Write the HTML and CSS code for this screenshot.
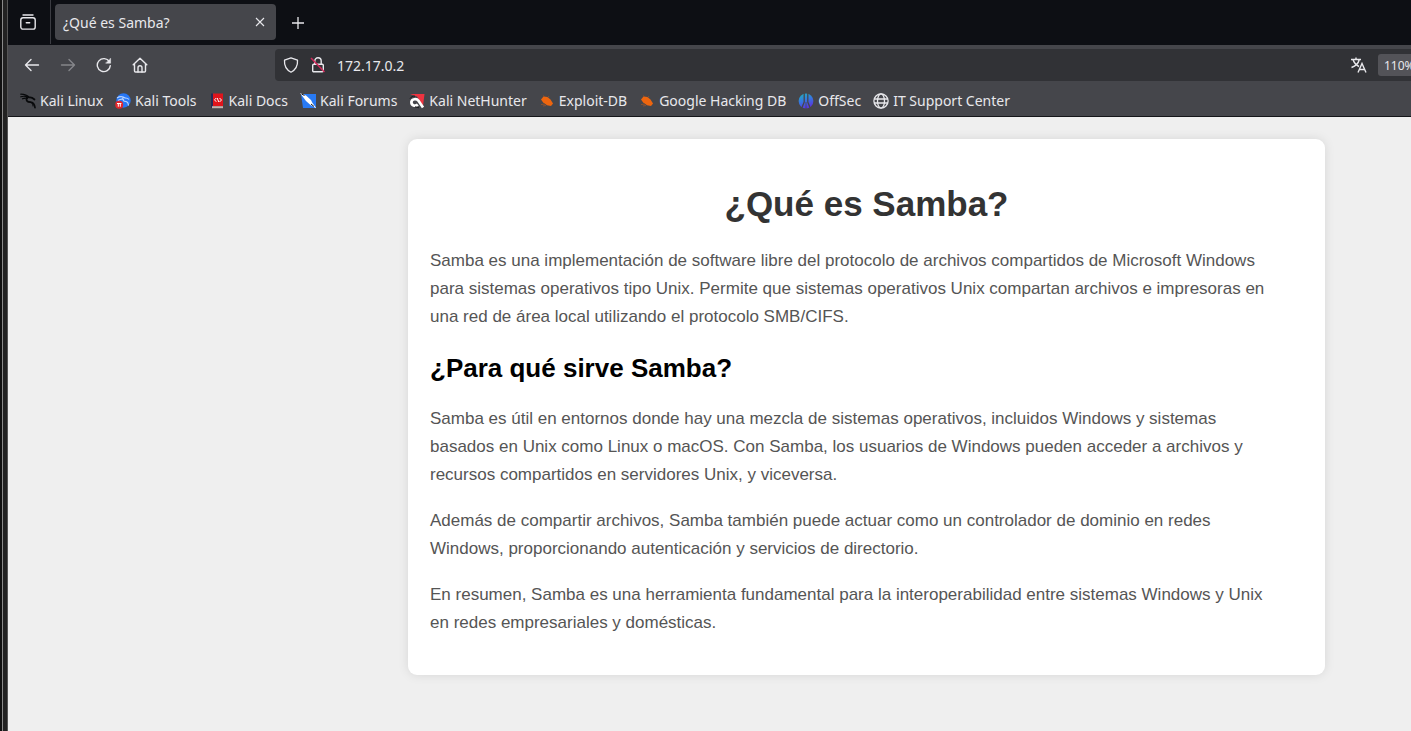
FILE: index.html
```html
<!DOCTYPE html>
<html lang="es">
  <head>
    <meta charset="UTF-8">
    <title>¿Qué es Samba?</title>
    <link rel="stylesheet" href="styles.css">
  </head>

  <body>
    <div class="edge"></div>
    <div class="browser">
      <div class="tabs">
        <button class="view" aria-label="Firefox View">
          <svg width="16" height="16" viewBox="0 0 16 16" fill="none" stroke="currentColor" stroke-width="1.4" stroke-linecap="round">
            <path d="M3 1h10"/>
            <rect x="0.8" y="3.7" width="14.4" height="11.4" rx="2.2"/>
            <path d="M6.3 8.8h3.4"/>
          </svg>
        </button>
        <div class="tab">
          <span class="tab-title">¿Qué es Samba?</span>
          <button class="close" aria-label="Cerrar">
            <svg width="10" height="10" viewBox="0 0 10 10" stroke="currentColor" stroke-width="1.1"><path d="M1 1l8 8M9 1l-8 8"/></svg>
          </button>
        </div>
        <button class="new-tab" aria-label="Nueva pestaña">
          <svg width="12" height="12" viewBox="0 0 12 12" stroke="currentColor" stroke-width="1.3"><path d="M6 0v12M0 6h12"/></svg>
        </button>
      </div>

      <div class="toolbar">
        <div class="nav">
          <button aria-label="Atrás">
            <svg width="16" height="16" viewBox="0 0 16 16" fill="none" stroke="currentColor" stroke-width="1.4" stroke-linecap="round" stroke-linejoin="round"><path d="M14.5 8H1.5M7 2.5L1.5 8L7 13.5"/></svg>
          </button>
          <button aria-label="Adelante" disabled>
            <svg width="16" height="16" viewBox="0 0 16 16" fill="none" stroke="currentColor" stroke-width="1.4" stroke-linecap="round" stroke-linejoin="round"><path d="M1.5 8h13M9 2.5L14.5 8L9 13.5"/></svg>
          </button>
          <button aria-label="Recargar">
            <svg width="16" height="16" viewBox="0 0 16 16" fill="none" stroke="currentColor" stroke-width="1.4" stroke-linecap="round" stroke-linejoin="round">
              <path d="M13.4 4.8A6.5 6.5 0 1 0 14.3 8.6"/>
              <path d="M14.6 1.5v4.7h-4.7z" fill="currentColor" stroke-width="0.5"/>
            </svg>
          </button>
          <button aria-label="Inicio">
            <svg width="16" height="16" viewBox="0 0 16 16" fill="none" stroke="currentColor" stroke-width="1.4" stroke-linecap="round" stroke-linejoin="round">
              <path d="M1.2 7.8L8 1.2l6.8 6.6M2.5 6.8V14a1 1 0 0 0 1 1h9a1 1 0 0 0 1-1V6.8"/>
              <path d="M6 15v-4.2a2 2 0 0 1 4 0V15"/>
            </svg>
          </button>
        </div>
        <div class="urlbar">
          <svg width="16" height="16" viewBox="0 0 16 16" fill="none" stroke="currentColor" stroke-width="1.3" stroke-linejoin="round">
            <path d="M8 .8L14.5 3.2c.4 5-1.8 9.4-6.5 12C3.3 12.6 1.1 8.2 1.5 3.2z"/>
          </svg>
          <svg width="16" height="16" viewBox="0 0 16 16" fill="none" stroke="currentColor" stroke-width="1.4">
            <path d="M4.8 7V4a3.2 3.2 0 0 1 6.4 0v3"/>
            <rect x="2.7" y="7.3" width="10.6" height="7.4" rx="1"/>
            <path d="M1 1l13.5 14" stroke="#d0285a" stroke-width="1.5"/>
          </svg>
          <input type="text" class="address" aria-label="Dirección" value="172.17.0.2">
          <button class="translate" aria-label="Traducir">
            <svg width="16" height="16" viewBox="0 0 16 16" fill="none" stroke="currentColor" stroke-width="1.4">
              <path d="M0 2.5h10M5 .5v2M2 2.5c1 3.5 3 5.5 6 7M8.3 2.5C7.5 6 4.5 9 .5 10.5"/>
              <path d="M7 15.5l4-9l4 9M8.5 12.5h5"/>
            </svg>
          </button>
          <button class="zoom">110%</button>
        </div>
      </div>

      <div class="bookmarks">
        <a href="#">
          <svg width="16" height="16" viewBox="0 0 16 16" fill="none" stroke="#08090b" stroke-linecap="round">
            <path d="M.8 1.2c3 .2 6 .6 8.5 3.2M.8 3.8c2.5-.8 5-.7 7 .6M2.5 5.8c1.5-.8 3-.9 5-.6" stroke-width="1.2"/>
            <path d="M7.5 4c-2.5 3.5 0 5 3 5.2c2.5.2 4 1.8 4.500 5.500M9 4.500c2-.5 3.500.2 5.500 2" stroke-width="1.7"/>
            <path d="M10 9c2.5.8 3.2 2.5 3 4"/>
          </svg>
          Kali Linux
        </a>
        <a href="#">
          <svg width="16" height="16" viewBox="0 0 16 16" fill="none">
            <circle cx="8.5" cy="7.5" r="7.2" fill="#2777f5"/>
            <path d="M2 5c3-2 6-1.5 8.5.2M3 7.5c2.5-1.8 4-1.8 6-1M8 4.5c-1 3 1 3.8 3 4c1.6.3 2.3 1.5 2.5 4M10 5c2-.2 3 .3 4 1.5" stroke="#b9d5ff" stroke-width="1.1"/>
            <circle cx="4.2" cy="11.8" r="4" fill="#e3262b"/>
            <path d="M2 10.5h4.4M3.3 10.5v3.2M5.3 10.5v3.2" stroke="#fff"/>
          </svg>
          Kali Tools
        </a>
        <a href="#">
          <svg width="16" height="16" viewBox="0 0 16 16" fill="none">
            <path d="M2 .5h2V15H2z" fill="#262a56"/>
            <path d="M4 .5h10v12.5H4z" fill="#e0141c"/>
            <path d="M3 13.2h11v2H3z" fill="#c6b2b0"/>
            <path d="M7.3 5L5.5 6.8l1.8 2M10.5 5l2 2l-2 2M8.2 5l1.6 4" stroke="#fff"/>
          </svg>
          Kali Docs
        </a>
        <a href="#">
          <svg width="16" height="16" viewBox="0 0 16 16">
            <path d="M1 1h15v14H3z" fill="#287af4"/>
            <path d="M0 0l6 2.500l5 4.500l1.500 3l4 5.500l-6-3.500l-4.500-4l-3-4z" fill="#fff"/>
            <path d="M1.500 1l3 1.500M11 11l3 2.500" stroke="#15191f" fill="none"/>
          </svg>
          Kali Forums
        </a>
        <a href="#">
          <svg width="16" height="16" viewBox="0 0 16 16" fill="none">
            <path d="M1 1h14.500l-1.500 12L8 3.500z" fill="#ee3340"/>
            <path d="M14 14.500L9.500 7.800c-1.800-2.600-6.800-2-7.100 1.200c-.2 3.200 3.800 5 6.400 2.500" stroke="#fff" stroke-width="2.7"/>
            <path d="M1 5.500c1-1.600 3-2.600 5-2.300M6 13.800l4 1" stroke="#17191d"/>
          </svg>
          Kali NetHunter
        </a>
        <a href="#">
          <svg width="16" height="16" viewBox="0 0 16 16">
            <path d="M2 6.500L4.500 3.500l4 .5l3 2.500l2.500 4l-2 2.500l-4-.7l-4-3z" fill="#ed650f"/>
            <path d="M5.500 4L4.500 2.500M9 4.500l1-1.500M2 11.500l4-.5M7 12.500l-3 .5" stroke="#a75625" stroke-width=".7" fill="none"/>
          </svg>
          Exploit-DB
        </a>
        <a href="#">
          <svg width="16" height="16" viewBox="0 0 16 16">
            <path d="M2 6.500L4.500 3.500l4 .5l3 2.500l2.500 4l-2 2.500l-4-.7l-4-3z" fill="#ed650f"/>
            <path d="M5.500 4L4.500 2.500M9 4.500l1-1.500M2 11.500l4-.5M7 12.500l-3 .5" stroke="#a75625" stroke-width=".7" fill="none"/>
          </svg>
          Google Hacking DB
        </a>
        <a href="#">
          <svg width="16" height="16" viewBox="0 0 16 16">
            <defs>
              <linearGradient id="offsec" gradientUnits="userSpaceOnUse" x1="3" y1="0" x2="9" y2="15">
                <stop offset="0" stop-color="#20b3bd"/>
                <stop offset="0.5" stop-color="#3578e0"/>
                <stop offset="1" stop-color="#5a35dc"/>
              </linearGradient>
            </defs>
            <circle cx="8" cy="8" r="7.4" fill="url(#offsec)"/>
            <path d="M6.2 0v9L3.800 15M9.800 0v9l2.400 6" stroke="#45464b" stroke-width="1.3" fill="none"/>
            <path d="M8 9v7" stroke="#45464b" stroke-width=".8"/>
          </svg>
          OffSec
        </a>
        <a href="#">
          <svg width="16" height="16" viewBox="0 0 16 16" fill="none" stroke="currentColor" stroke-width="1.3">
            <circle cx="8" cy="8" r="7.1"/>
            <ellipse cx="8" cy="8" rx="3.5" ry="7.1"/>
            <path d="M1 6h14M1 10h14"/>
          </svg>
          IT Support Center
        </a>
      </div>

      <main class="page">
        <div class="container">
          <h1>¿Qué es Samba?</h1>
          <p>Samba es una implementación de software libre del protocolo de archivos compartidos de Microsoft Windows para sistemas operativos tipo Unix. Permite que sistemas operativos Unix compartan archivos e impresoras en una red de área local utilizando el protocolo SMB/CIFS.</p>
          <h2>¿Para qué sirve Samba?</h2>
          <p>Samba es útil en entornos donde hay una mezcla de sistemas operativos, incluidos Windows y sistemas basados en Unix como Linux o macOS. Con Samba, los usuarios de Windows pueden acceder a archivos y recursos compartidos en servidores Unix, y viceversa.</p>
          <p>Además de compartir archivos, Samba también puede actuar como un controlador de dominio en redes Windows, proporcionando autenticación y servicios de directorio.</p>
          <p>En resumen, Samba es una herramienta fundamental para la interoperabilidad entre sistemas Windows y Unix en redes empresariales y domésticas.</p>
        </div>
      </main>
    </div>
  </body>
</html>
```

FILE: styles.css
```css
* {
  box-sizing: border-box;
}

body {
  display: flex;
  margin: 0;
  min-height: 100vh;
  overflow: hidden;
  background-color: #efefef;
  font-family: "Noto Sans", sans-serif;
  font-size: 14px;
  color: #e8e8ec;
}

button {
  display: flex;
  align-items: center;
  justify-content: center;
  padding: 0;
  border: none;
  background: none;
  color: inherit;
  font: inherit;
}

svg {
  flex: none;
}

.edge {
  flex: none;
  width: 8px;
  background: linear-gradient(to right, #111 2px, #8a8a8a 2px 3px, #222 3px 7px, #555 7px);
}

.browser {
  flex: 1;
  min-width: 0;
}

.tabs {
  display: flex;
  height: 45px;
  background-color: #0d0f14;
}

.view {
  width: 43px;
  height: 44px;
  padding-right: 2px;
  border-right: 1px solid #3b3c42;
}

.tab {
  display: flex;
  align-items: center;
  justify-content: space-between;
  width: 221px;
  height: 36px;
  margin: 4px;
  padding: 0 11px 0 8px;
  border-radius: 4px;
  background-color: #45464b;
}

.new-tab {
  width: 36px;
}

.toolbar {
  display: flex;
  align-items: center;
  height: 40px;
  background-color: #45464b;
}

.nav {
  display: flex;
  gap: 20px;
  width: 267px;
  padding-left: 16px;
}

.nav button:disabled {
  color: #85868a;
}

.urlbar {
  display: flex;
  flex: 1;
  align-items: center;
  gap: 11px;
  height: 32px;
  padding-left: 8px;
  overflow: hidden;
  border-radius: 4px 0 0 4px;
  background-color: #313236;
}

.address {
  flex: 1;
  min-width: 0;
  padding: 0;
  border: none;
  outline: none;
  background: none;
  color: inherit;
  font: inherit;
}

.zoom {
  flex: none;
  width: 33px;
  height: 22px;
  padding-left: 6px;
  justify-content: flex-start;
  border-radius: 3px 0 0 3px;
  background-color: #535358;
  font-size: 12px;
}

.bookmarks {
  display: flex;
  gap: 12px;
  height: 32px;
  padding-left: 12px;
  border-bottom: 1px solid #15161a;
  background-color: #45464b;
}

.bookmarks a {
  display: flex;
  align-items: center;
  gap: 4px;
  color: inherit;
  text-decoration: none;
  white-space: nowrap;
}

.page {
  padding: 22px 86px 40px;
  font-family: "Liberation Sans", Arial, sans-serif;
  font-size: 17px;
}

.container {
  max-width: 917px;
  margin-left: auto;
  padding: 22px 22px 20px;
  border-radius: 9px;
  background-color: #fff;
  box-shadow: 0 0 11px rgba(0, 0, 0, 0.1);
}

h1 {
  margin: 23px 0;
  color: #333;
  font-size: 35px;
  line-height: 40px;
  text-align: center;
}

h2 {
  margin: 22px 0;
  color: #000;
  font-size: 26px;
  line-height: 30px;
}

p {
  max-width: 845px;
  margin: 18px 0;
  color: #555;
  line-height: 28px;
}
```
